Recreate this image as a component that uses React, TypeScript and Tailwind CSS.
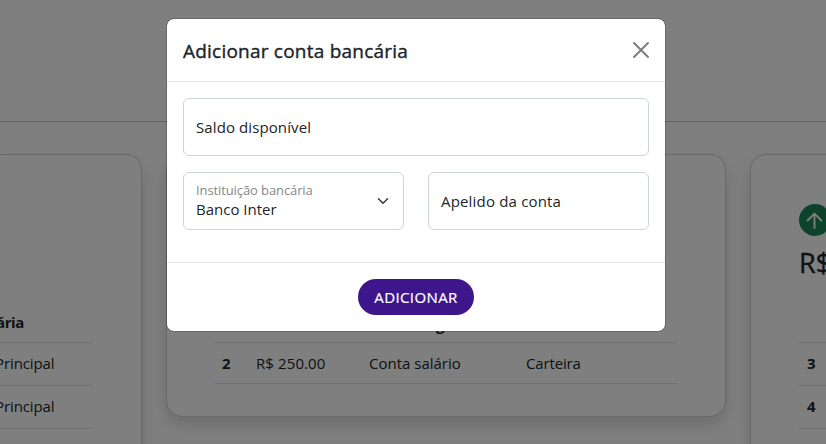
import type { ReactNode } from "react";

function Card({ className, children }: { className: string; children?: ReactNode }) {
  return (
    <section
      className={`shrink-0 rounded-2xl border border-black/[0.175] bg-white shadow-[0_8px_16px_rgba(0,0,0,0.15)] ${className}`}
    >
      {children}
    </section>
  );
}

function Dashboard() {
  return (
    <div className="flex h-[444px] w-[826px] flex-col overflow-hidden bg-white">
      <header className="h-[122px] shrink-0 border-b border-[#c8c8c8]" />
      <main className="flex items-start gap-6 pt-8">
        <Card className="h-[340px] w-[142px] rounded-l-none border-l-0 pt-[145px] pr-12">
          <div className="flex h-[43px] items-center border-b border-[#dee2e6] pt-px">
            <span className="-ml-[4px] tracking-[-0.4px] font-bold">ária</span>
          </div>
          <div className="flex h-[43px] items-center border-b border-[#dee2e6] pb-0.5">
            <span className="-ml-[5px] tracking-[-0.1px]">Principal</span>
          </div>
          <div className="flex h-[43px] items-center border-b border-[#dee2e6] pb-0.5">
            <span className="-ml-[5px] tracking-[-0.1px]">Principal</span>
          </div>
        </Card>
        <Card className="h-[263px] w-[560px] px-12 pt-[147px]">
          <div className="grid h-[41px] grid-cols-[41px_113px_157px_1fr] items-center border-b border-[#dee2e6] font-bold">
            <span className="pl-2">#</span>
            <span>Saldo</span>
            <span className="pt-[5px] pl-[67px]">g</span>
            <span>Conta</span>
          </div>
          <div className="grid h-[41px] grid-cols-[41px_113px_157px_1fr] items-center border-b border-[#dee2e6]">
            <span className="pl-[7px] font-bold">2</span>
            <span className="tracking-[0.1px]">R$ 250.00</span>
            <span>Conta salário</span>
            <span className="tracking-[-0.15px]">Carteira</span>
          </div>
        </Card>
        <Card className="h-[340px] w-[560px] px-12 pt-[49px]">
          <div className="flex size-8 items-center justify-center rounded-full bg-[#198754] pr-px text-white">
            <svg viewBox="0 0 16 16" className="size-[17px]" fill="none">
              <path
                d="M8 15V1.5M1.5 8 8 1.5 14.5 8"
                stroke="currentColor"
                strokeWidth="1.8"
                strokeLinecap="round"
                strokeLinejoin="round"
              />
            </svg>
          </div>
          <div className="mt-2 h-[38px] text-[27px] leading-[38px] [-webkit-text-stroke:0.4px]">R$ 1250.00</div>
          <div className="h-[61px] border-b border-[#dee2e6]" />
          <div className="flex h-[43px] items-center border-b border-[#dee2e6] pb-0.5 pl-2 font-bold">3</div>
          <div className="flex h-[43px] items-center border-b border-[#dee2e6] pb-0.5 pl-2 font-bold">4</div>
        </Card>
      </main>
    </div>
  );
}

const fieldClass = "flex h-[58px] items-center rounded-md border border-[#ced4da] px-3";

function AddAccountDialog() {
  return (
    <div
      role="dialog"
      className="flex h-[314px] w-[500px] flex-col rounded-lg border border-black/[0.175] bg-white bg-clip-padding"
    >
      <div className="flex h-[63px] shrink-0 items-center justify-between border-b border-[#dee2e6] px-4">
        <h5 className="pt-0.5 text-[19px] tracking-[0.22px] [-webkit-text-stroke:0.4px]">Adicionar conta bancária</h5>
        <button aria-label="Fechar" className="opacity-50">
          <svg viewBox="0 0 16 16" className="size-4" fill="#000">
            <path d="M.293.293a1 1 0 0 1 1.414 0L8 6.586 14.293.293a1 1 0 1 1 1.414 1.414L9.414 8l6.293 6.293a1 1 0 0 1-1.414 1.414L8 9.414l-6.293 6.293a1 1 0 0 1-1.414-1.414L6.586 8 .293 1.707a1 1 0 0 1 0-1.414z" />
          </svg>
        </button>
      </div>
      <div className="flex h-[180px] shrink-0 flex-col gap-4 p-4">
        <div className={fieldClass}>
          <span className="tracking-[0.1px]">Saldo disponível</span>
        </div>
        <div className="grid grid-cols-2 gap-6">
          <div className={`${fieldClass} justify-between`}>
            <div className="flex flex-col pb-0.5">
              <span className="text-[13px] leading-[18px] tracking-[-0.1px] text-[#85888b]">Instituição bancária</span>
              <span className="leading-5">Banco Inter</span>
            </div>
            <svg viewBox="0 0 16 16" className="mr-0.5 size-3" fill="none">
              <path d="m2 5 6 6 6-6" stroke="#343a40" strokeWidth="2" strokeLinecap="round" strokeLinejoin="round" />
            </svg>
          </div>
          <div className={fieldClass}>
            <span className="tracking-[0.18px]">Apelido da conta</span>
          </div>
        </div>
      </div>
      <div className="flex grow items-center justify-center border-t border-[#dee2e6]">
        <button className="h-9 w-[116px] rounded-full bg-[#3d168b] text-[15px] tracking-[0.4px] text-white [-webkit-text-stroke:0.2px]">
          ADICIONAR
        </button>
      </div>
    </div>
  );
}

export default function App() {
  return (
    <div className="relative h-[444px] w-[826px] overflow-hidden font-['Open_Sans','Noto_Sans',sans-serif] text-[15px] leading-6 whitespace-nowrap text-[#212529]">
      <Dashboard />
      <div className="absolute inset-0 flex items-start bg-black/50 pt-[18px] pl-[166px]">
        <AddAccountDialog />
      </div>
    </div>
  );
}
